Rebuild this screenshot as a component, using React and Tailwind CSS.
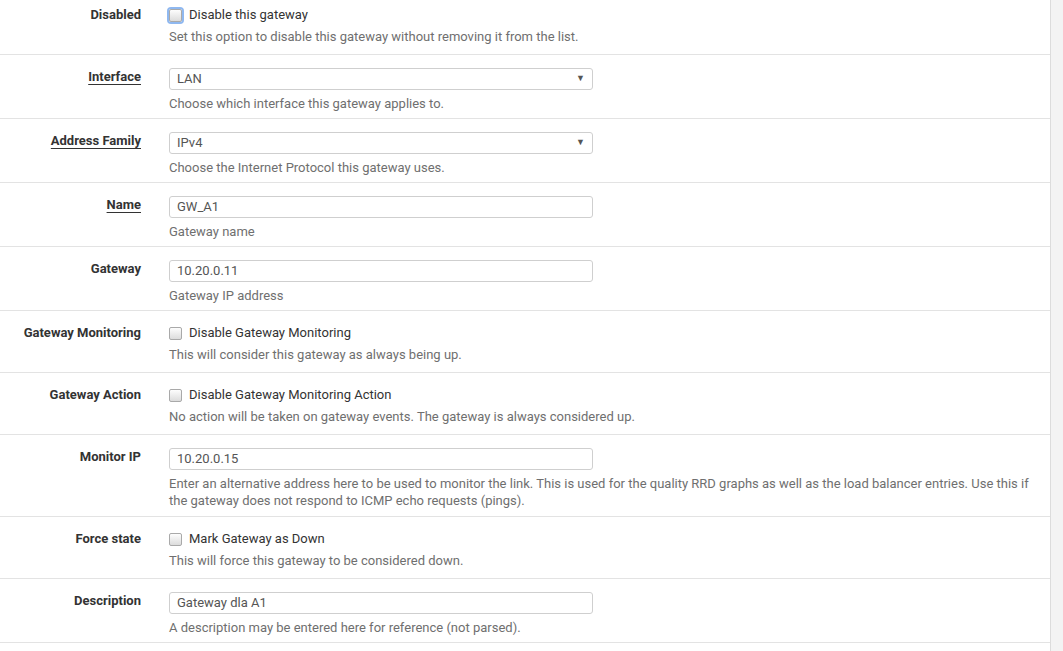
import React from "react";

function Checkbox({ focused }) {
  return (
    <span
      className={
        "inline-block shrink-0 w-[13px] h-[13px] rounded-[2px] border border-[#a9a9a9] bg-gradient-to-b from-[#fdfdfd] to-[#dcdcdc] " +
        (focused ? "ring-2 ring-[#8fb8f0]" : "")
      }
    />
  );
}

function Label({ text, required }) {
  return (
    <div className="w-[155px] shrink-0 pr-[14px] text-right text-[13px] leading-[18px]">
      <span
        className={
          "font-bold text-[#333] " +
          (required ? "underline decoration-[1px] underline-offset-[3px]" : "")
        }
      >
        {text}
      </span>
    </div>
  );
}

function Help({ children }) {
  return <div className="mt-[5px] text-[13px] leading-[17px] text-[#6f6f6f]">{children}</div>;
}

function InputRow({ label, required, value, select, help, tall }) {
  return (
    <div className={"flex border-b border-[#e3e3e3] pt-[13px] " + (tall ? "pb-[7px]" : "pb-[6px]")}>
      <Label text={label} required={required} />
      <div className="ml-[14px] flex-1 pr-[10px]">
        <div className="w-[424px] h-[22px] border border-[#cfcfcf] rounded-[3px] flex items-center pl-[7px] pr-[7px] text-[13px] text-[#555]">
          <span className="flex-1">{value}</span>
          {select && <span className="text-[9px] text-[#555]">▼</span>}
        </div>
        <Help>{help}</Help>
      </div>
    </div>
  );
}

function CheckRow({ label, text, help, focused, first }) {
  return (
    <div className={"flex border-b border-[#e3e3e3] pb-[9px] " + (first ? "pt-[6px]" : "pt-[13px]")}>
      <Label text={label} />
      <div className="ml-[14px] flex-1 pr-[10px]">
        <div className="flex items-center h-[18px] gap-[7px] text-[13px] text-[#333]">
          <Checkbox focused={focused} />
          <span>{text}</span>
        </div>
        <div className="mt-[4px] text-[13px] leading-[17px] text-[#6f6f6f]">{help}</div>
      </div>
    </div>
  );
}

export default function App() {
  return (
    <div
      className="flex w-[1063px] h-[651px] overflow-hidden bg-[#f3f3f3]"
      style={{ fontFamily: "Roboto, 'Liberation Sans', sans-serif" }}
    >
      <div className="w-[1051px] shrink-0 bg-white border-r border-[#dcdcdc]">
        <CheckRow
          first
          focused
          label="Disabled"
          text="Disable this gateway"
          help="Set this option to disable this gateway without removing it from the list."
        />
        <InputRow label="Interface" required value="LAN" select help="Choose which interface this gateway applies to." />
        <InputRow label="Address Family" required value="IPv4" select help="Choose the Internet Protocol this gateway uses." />
        <InputRow label="Name" required value="GW_A1" help="Gateway name" />
        <InputRow label="Gateway" value="10.20.0.11" help="Gateway IP address" />
        <CheckRow
          label="Gateway Monitoring"
          text="Disable Gateway Monitoring"
          help="This will consider this gateway as always being up."
        />
        <CheckRow
          label="Gateway Action"
          text="Disable Gateway Monitoring Action"
          help="No action will be taken on gateway events. The gateway is always considered up."
        />
        <InputRow
          tall
          label="Monitor IP"
          value="10.20.0.15"
          help="Enter an alternative address here to be used to monitor the link. This is used for the quality RRD graphs as well as the load balancer entries. Use this if the gateway does not respond to ICMP echo requests (pings)."
        />
        <CheckRow label="Force state" text="Mark Gateway as Down" help="This will force this gateway to be considered down." />
        <InputRow
          label="Description"
          value="Gateway dla A1"
          help="A description may be entered here for reference (not parsed)."
        />
      </div>
    </div>
  );
}
